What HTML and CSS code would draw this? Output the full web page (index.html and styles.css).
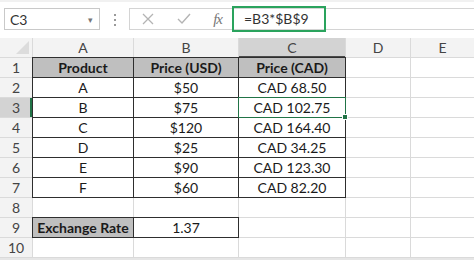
FILE: index.html
```html
<!DOCTYPE html>
<html lang="en">
<head>
    <meta charset="UTF-8">
    <title>Exchange Rate</title>
    <link rel="stylesheet" href="styles.css">
</head>
<body>

<!-- Строка с полем имени и строкой формул -->
<div class="toolbar">
    <div class="name-box">
        <span>C3</span>
        <span class="drop">&#9662;</span>
    </div>
    <div class="dots"><i></i><i></i><i></i></div>
    <div class="formula-bar">
        <div class="fx-buttons">
            <svg width="14" height="14" viewBox="0 0 14 14"><path d="M2 2 L12 12 M12 2 L2 12" stroke="#b4b4b4" stroke-width="1.3" fill="none"/></svg>
            <svg width="16" height="14" viewBox="0 0 16 14"><path d="M2 7 L6 11 L14 2" stroke="#b4b4b4" stroke-width="1.4" fill="none"/></svg>
            <span class="fx">fx</span>
        </div>
        <div class="formula">=B3*$B$9</div>
    </div>
</div>

<div class="sheet">
    <div class="corner"></div>
    <div class="col-head">A</div>
    <div class="col-head">B</div>
    <div class="col-head active">C</div>
    <div class="col-head">D</div>
    <div class="col-head">E</div>

    <div class="row-head">1</div>
    <div class="cell boxed title">Product</div>
    <div class="cell boxed title">Price (USD)</div>
    <div class="cell boxed title">Price (CAD)</div>
    <div class="cell"></div>
    <div class="cell"></div>

    <div class="row-head">2</div>
    <div class="cell boxed">A</div>
    <div class="cell boxed">$50</div>
    <div class="cell boxed">CAD 68.50</div>
    <div class="cell"></div>
    <div class="cell"></div>

    <div class="row-head active">3</div>
    <div class="cell boxed">B</div>
    <div class="cell boxed">$75</div>
    <div class="cell boxed selected">CAD 102.75</div>
    <div class="cell"></div>
    <div class="cell"></div>

    <div class="row-head">4</div>
    <div class="cell boxed">C</div>
    <div class="cell boxed">$120</div>
    <div class="cell boxed">CAD 164.40</div>
    <div class="cell"></div>
    <div class="cell"></div>

    <div class="row-head">5</div>
    <div class="cell boxed">D</div>
    <div class="cell boxed">$25</div>
    <div class="cell boxed">CAD 34.25</div>
    <div class="cell"></div>
    <div class="cell"></div>

    <div class="row-head">6</div>
    <div class="cell boxed">E</div>
    <div class="cell boxed">$90</div>
    <div class="cell boxed">CAD 123.30</div>
    <div class="cell"></div>
    <div class="cell"></div>

    <div class="row-head">7</div>
    <div class="cell boxed">F</div>
    <div class="cell boxed">$60</div>
    <div class="cell boxed">CAD 82.20</div>
    <div class="cell"></div>
    <div class="cell"></div>

    <div class="row-head">8</div>
    <div class="cell"></div>
    <div class="cell"></div>
    <div class="cell"></div>
    <div class="cell"></div>
    <div class="cell"></div>

    <div class="row-head">9</div>
    <div class="cell boxed title">Exchange Rate</div>
    <div class="cell boxed">1.37</div>
    <div class="cell"></div>
    <div class="cell"></div>
    <div class="cell"></div>

    <div class="row-head">10</div>
    <div class="cell"></div>
    <div class="cell"></div>
    <div class="cell"></div>
    <div class="cell"></div>
    <div class="cell"></div>
</div>

<div class="scroll-strip"></div>

</body>
</html>
```

FILE: styles.css
```css
body {
    margin: 0;
    padding: 0;
    width: 474px;
    height: 260px;
    overflow: hidden;
    background-color: #fff;
    font-family: 'Lato', 'Liberation Sans', sans-serif;
    color: #222;
}

.toolbar {
    height: 38px;
    display: flex;
    align-items: flex-start;
    border-top: 2px solid #f1f1f1;
    box-sizing: border-box;
}

.name-box {
    margin: 6px 0 0 4px;
    width: 96px;
    height: 22px;
    box-sizing: border-box;
    border: 1px solid #c9c9c9;
    display: flex;
    align-items: center;
    justify-content: space-between;
    padding: 0 6px 0 5px;
    font-size: 14px;
    color: #333;
}

.name-box .drop {
    font-size: 9px;
    color: #777;
}

.dots {
    width: 29px;
    display: flex;
    flex-direction: column;
    align-items: center;
    gap: 3px;
    margin-top: 12px;
}

.dots i {
    width: 2px;
    height: 2px;
    background-color: #9a9a9a;
}

.formula-bar {
    flex: 1;
    margin-top: 6px;
    height: 22px;
    box-sizing: border-box;
    border: 1px solid #d4d4d4;
    border-right: none;
    display: flex;
    align-items: center;
}

.fx-buttons {
    width: 102px;
    display: flex;
    align-items: center;
    justify-content: space-between;
    padding: 0 10px 0 11px;
    box-sizing: border-box;
}

.fx {
    font-family: 'Liberation Serif', serif;
    font-style: italic;
    font-size: 15px;
    color: #777;
    letter-spacing: -1px;
}

.formula {
    width: 94px;
    height: 26px;
    box-sizing: border-box;
    border: 2px solid #2aa35d;
    font-size: 14px;
    color: #333;
    padding-left: 10px;
    line-height: 22px;
}

.sheet {
    display: grid;
    grid-template-columns: 32px 100px 104px 106px 64px 1fr;
    grid-auto-rows: 19px;
    gap: 1px;
    background-color: #dadada;
    padding-bottom: 1px;
}

.corner {
    background-color: #f3f3f3;
    position: relative;
}

.corner::after {
    content: '';
    position: absolute;
    right: 3px;
    bottom: 3px;
    border-style: solid;
    border-width: 0 0 13px 13px;
    border-color: transparent transparent #dcdcdc transparent;
}

.col-head,
.row-head {
    background-color: #f3f3f3;
    color: #444;
    font-size: 14px;
    display: flex;
    align-items: center;
    justify-content: center;
}

.col-head.active {
    background-color: #d3d3d3;
    box-shadow: inset 0 -1px 0 #4a4a4a;
}

.row-head.active {
    background-color: #d3d3d3;
    box-shadow: inset -2px 0 0 #217346;
}

.cell {
    background-color: #fff;
    font-size: 14px;
    display: flex;
    align-items: center;
    justify-content: center;
    color: #1a1a1a;
}

.cell.boxed {
    box-shadow: 0 0 0 1px #2e2e2e;
}

.cell.title {
    background-color: #bfbfbf;
    font-weight: bold;
}

/* Выделенная ячейка C3 */
.cell.selected {
    position: relative;
}

.cell.selected::before {
    content: '';
    position: absolute;
    inset: -1px -1px -1px -1px;
    border: 1px solid #217346;
}

.cell.selected::after {
    content: '';
    position: absolute;
    right: -3px;
    bottom: -3px;
    width: 4px;
    height: 4px;
    background-color: #217346;
    border: 1px solid #fff;
}

.scroll-strip {
    height: 3px;
    background-color: #e6e6e6;
}
```
